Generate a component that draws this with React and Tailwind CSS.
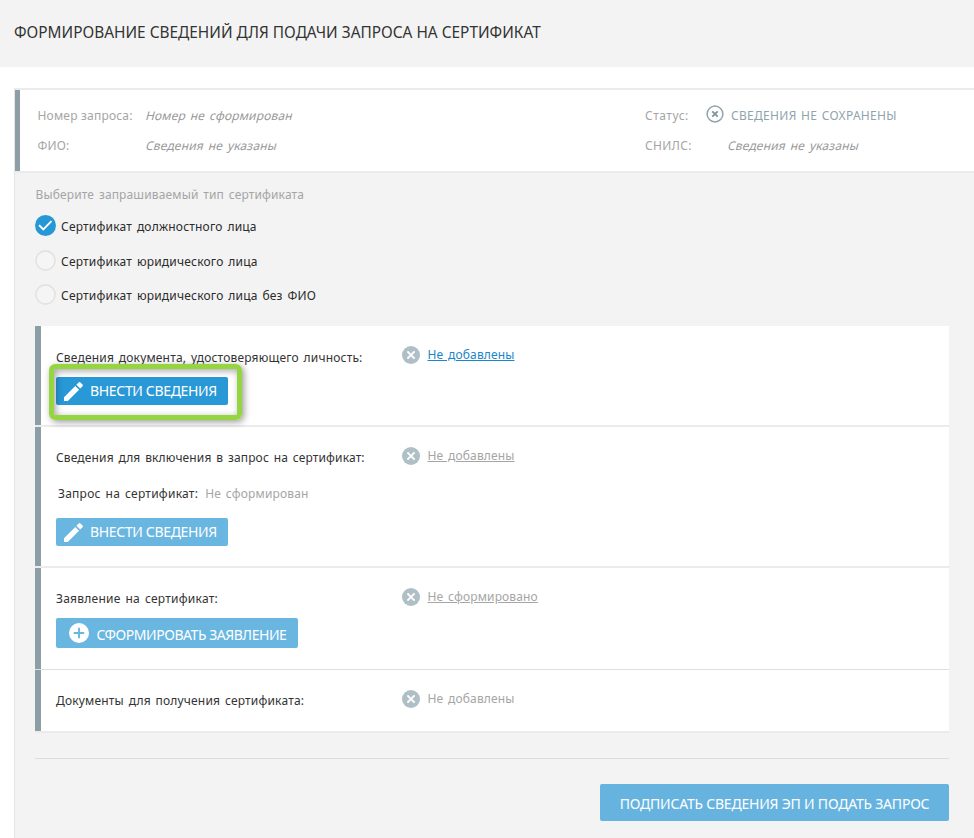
import React from 'react';

const types = [
  { label: 'Сертификат должностного лица', checked: true },
  { label: 'Сертификат юридического лица', checked: false },
  { label: 'Сертификат юридического лица без ФИО', checked: false },
];

const CrossIcon = () => (
  <svg width="18" height="18" viewBox="0 0 18 18" className="shrink-0">
    <circle cx="9" cy="9" r="9" fill="#afbfc6" />
    <path d="M5.4 5.4l7.2 7.2M12.6 5.4l-7.2 7.2" stroke="#fff" strokeWidth="2" />
  </svg>
);

const CrossOutlineIcon = () => (
  <svg width="18" height="18" viewBox="0 0 18 18" className="shrink-0">
    <circle cx="9" cy="9" r="7.9" fill="none" stroke="#90a4ae" strokeWidth="1.5" />
    <path d="M6.3 6.3l5.4 5.4M11.7 6.3l-5.4 5.4" stroke="#7d939e" strokeWidth="1.8" />
  </svg>
);

const PencilIcon = () => (
  <svg width="19" height="19" viewBox="0 0 19 19" className="shrink-0">
    <path d="M0 15.2L11.3 3.9l3.8 3.8L3.8 19H0zM12.4 2.8L14.7.5a1.2 1.2 0 0 1 1.7 0l2.1 2.1a1.2 1.2 0 0 1 0 1.7l-2.3 2.3z" fill="#fff" />
  </svg>
);

const PlusIcon = () => (
  <svg width="20" height="20" viewBox="0 0 20 20" className="shrink-0">
    <circle cx="10" cy="10" r="10" fill="#fff" />
    <path d="M10 4.8v10.4M4.8 10h10.4" stroke="#69b6e1" strokeWidth="1.9" />
  </svg>
);

const Radio = ({ checked }) => (
  <svg width="21" height="21" viewBox="0 0 21 21" className="shrink-0">
    {checked ? (
      <>
        <circle cx="10.5" cy="10.5" r="10.5" fill="#2798d6" />
        <path d="M4.1 10.2l4.2 4.2 8.2-8.3" fill="none" stroke="#fff" strokeWidth="1.9" />
      </>
    ) : (
      <circle cx="10.5" cy="10.5" r="9.6" fill="#f5f5f5" stroke="#e2e2e2" strokeWidth="1.6" />
    )}
  </svg>
);

// Upright letters slanted, the face's own italic is too narrow
const Slanted = ({ children }) => (
  <span className="inline-block -skew-x-[15deg] text-[#999]">{children}</span>
);

const Section = ({ className, children }) => (
  <section className={`flex border-[#ebebeb] bg-white ${className}`}>
    <div className="w-1.5 shrink-0 bg-[#8c9ea6]" />
    {children}
  </section>
);

const Status = ({ className, children }) => (
  <div className="flex h-[18px] items-center gap-[7.5px]">
    <CrossIcon />
    <span className={`text-xs leading-[18px] tracking-[0.14px] ${className}`}>{children}</span>
  </div>
);

const EditButton = ({ className }) => (
  <button className={`flex h-7 w-[172px] items-center rounded-xs pl-2 text-[14px] leading-7 tracking-[-0.34px] text-white ${className}`}>
    <PencilIcon />
    <span className="ml-[7px] whitespace-nowrap">ВНЕСТИ СВЕДЕНИЯ</span>
  </button>
);

const App = () => {
  return (
    <div className="h-[838px] w-[974px] overflow-hidden whitespace-nowrap bg-white font-['Noto_Sans','Liberation_Sans',sans-serif] text-[#333]">
      <header className="h-[67px] bg-[#f3f3f3] pl-3.5 pt-5">
        <h1 className="pt-px text-[15.4px] leading-6">ФОРМИРОВАНИЕ СВЕДЕНИЙ ДЛЯ ПОДАЧИ ЗАПРОСА НА СЕРТИФИКАТ</h1>
      </header>

      <main className="ml-3.5 mt-[21px] h-[750px] border-l border-[#e6e6e6] bg-[#f3f3f3]">
        <div className="flex h-[85px] border-y-2 border-[#ebebeb] bg-white text-xs leading-[18px] text-[#a5a5a5]">
          <div className="w-[5px] shrink-0 bg-[#8c9ea6]" />
          <div className="ml-[17.5px] w-[108.5px] pt-[17px] tracking-[0.2px]">
            <p>Номер запроса:</p>
            <p className="mt-3">ФИО:</p>
          </div>
          <div className="w-[499px] pt-[17px] tracking-[0.18px] [word-spacing:1.5px]">
            <p><Slanted>Номер не сформирован</Slanted></p>
            <p className="mt-3"><Slanted>Сведения не указаны</Slanted></p>
          </div>
          <div className="w-[61px] pt-[17px]">
            <p className="tracking-[0.5px]">Статус:</p>
            <p className="mt-3 tracking-[0.3px]">СНИЛС:</p>
          </div>
          <div className="pt-[15px]">
            <div className="flex h-5 items-start gap-[7px] text-[#90a4ae]">
              <CrossOutlineIcon />
              <span className="pt-0.5 tracking-[0.3px] [word-spacing:1px]">СВЕДЕНИЯ НЕ СОХРАНЕНЫ</span>
            </div>
            <p className="ml-[22px] mt-3 tracking-[0.18px] [word-spacing:1.5px]"><Slanted>Сведения не указаны</Slanted></p>
          </div>
        </div>

        <div className="ml-5 w-[914px] pt-[13px]">
          <p className="ml-[0.5px] text-xs leading-[18px] tracking-[0.14px] text-[#a5a5a5] [word-spacing:1.5px]">Выберите запрашиваемый тип сертификата</p>
          <div className="mt-[11px] flex flex-col gap-[13.5px]">
            {types.map((type) => (
              <label key={type.label} className="flex h-[21px] items-center gap-[5px] text-xs tracking-[0.2px] text-[#2b2b2b] [word-spacing:1.5px]">
                <Radio checked={type.checked} />
                <span className="pt-[3px]">{type.label}</span>
              </label>
            ))}
          </div>

          <div className="mt-[21px] text-xs leading-[18px] [word-spacing:1.5px]">
            <Section className="h-[101px] border-b-2">
              <div className="w-[361px] pl-[15px] pt-[23px]">
                <p className="tracking-[0.18px]">Сведения документа, удостоверяющего личность:</p>
                <div className="relative mt-2.5 w-[172px]">
                  <EditButton className="bg-[#2898d7]" />
                  <div className="pointer-events-none absolute -left-[7px] -top-[13px] h-[56px] w-[193px] rounded-md border-[5px] border-[#95d640] shadow-[2px_2px_7px_rgba(0,0,0,0.4),inset_2px_2px_7px_rgba(0,0,0,0.35)]" />
                </div>
              </div>
              <div className="pt-5">
                <Status className="text-[#1b87c9] underline">Не добавлены</Status>
              </div>
            </Section>

            <Section className="h-[141px] border-b-2">
              <div className="w-[361px] pl-[15px] pt-[22px]">
                <p className="tracking-[0.14px]">Сведения для включения в запрос на сертификат:</p>
                <p className="ml-0.5 mt-[18px] flex gap-[7px]">
                  <span className="tracking-[0.25px]">Запрос на сертификат:</span>
                  <span className="tracking-[0.17px] text-[#a5a5a5]">Не сформирован</span>
                </p>
                <EditButton className="mt-[15px] bg-[#69b6e1]" />
              </div>
              <div className="pt-5">
                <Status className="text-[#a5a5a5] underline">Не добавлены</Status>
              </div>
            </Section>

            <Section className="h-[102px] border-b border-b-[#dedede]">
              <div className="w-[361px] pl-[15px] pt-[22px]">
                <p className="tracking-[0.25px]">Заявление на сертификат:</p>
                <button className="mt-2.5 flex h-[30px] w-[242px] items-center rounded-xs bg-[#69b6e1] pl-[12.5px] text-[14px] tracking-[-0.45px] text-white">
                  <PlusIcon />
                  <span className="ml-2 pt-1">СФОРМИРОВАТЬ ЗАЯВЛЕНИЕ</span>
                </button>
              </div>
              <div className="pt-5">
                <Status className="text-[#a5a5a5] underline">Не сформировано</Status>
              </div>
            </Section>

            <Section className="h-[63px] border-b-2">
              <div className="w-[361px] pl-[15px] pt-[22px]">
                <p className="tracking-[0.18px]">Документы для получения сертификата:</p>
              </div>
              <div className="pt-5">
                <Status className="text-[#a5a5a5]">Не добавлены</Status>
              </div>
            </Section>
          </div>

          <div className="mt-[25px] flex justify-end border-t border-[#dcdcdc] pt-[25px]">
            <button className="h-[37px] w-[349px] rounded-xs bg-[#67b3e0] pt-0.5 text-[14px] tracking-[-0.21px] text-white">
              ПОДПИСАТЬ СВЕДЕНИЯ ЭП И ПОДАТЬ ЗАПРОС
            </button>
          </div>
        </div>
      </main>
    </div>
  );
};

export default App;
